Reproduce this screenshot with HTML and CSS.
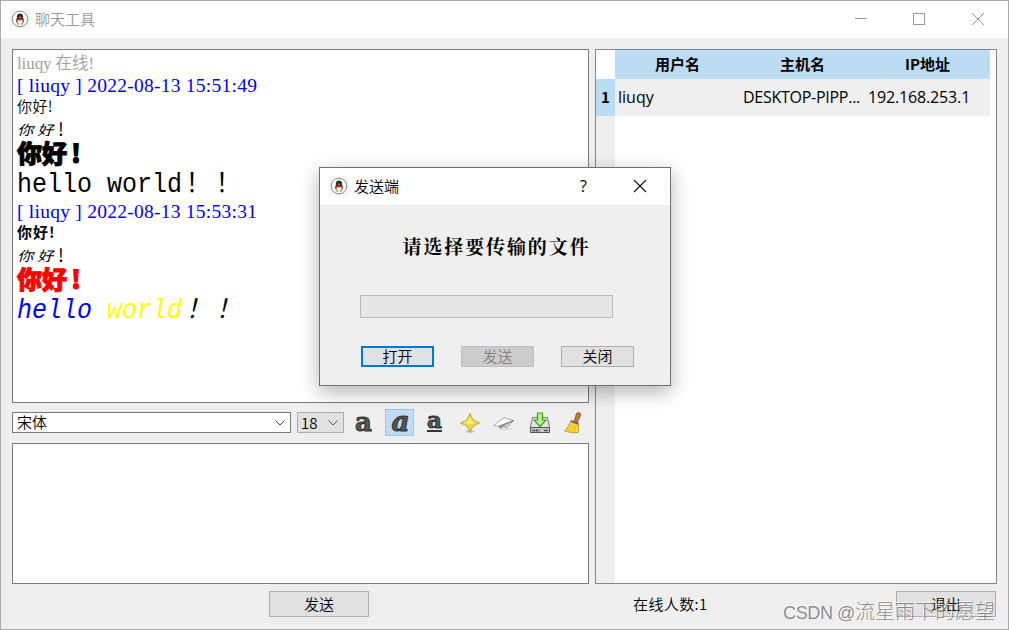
FILE: index.html
```html
<!DOCTYPE html>
<html lang="zh-CN">
<head>
<meta charset="UTF-8">
<meta name="viewport" content="width=device-width, initial-scale=1.0">
<title>聊天工具</title>
<link rel="stylesheet" href="styles.css">
</head>
<body>
<svg width="0" height="0" class="defs">
  <symbol id="penguin" viewBox="0 0 20 20">
    <rect width="20" height="20" fill="#f5f5f5"/>
    <circle cx="10" cy="10" r="7.8" fill="#fff" stroke="#8a8a8a" stroke-width="1"/>
    <ellipse cx="10" cy="8" rx="3.200" ry="3.600" fill="#2b2b2b"/>
    <ellipse cx="10" cy="11.800" rx="3.800" ry="3.300" fill="#333"/>
    <ellipse cx="10" cy="12.500" rx="2.700" ry="2.500" fill="#fff"/>
    <path d="M7.200 15h2M10.900 15h2" stroke="#d89a30" stroke-width="1.300"/>
    <path d="M6.400 9.200Q10 10.600 13.600 9.200V10.500Q10 11.800 8.500 11.100V12.300H7.300V11L6.400 10.700z" fill="#e8201c"/>
    <path d="M8.200 7.800h3.600L10 9.300z" fill="#e0a030"/>
  </symbol>
</svg>

<div class="window">
  <div class="titlebar">
    <svg class="logo" width="20" height="20"><use href="#penguin"/></svg>
    <span class="title">聊天工具</span>
    <svg class="controls" width="132" height="20" fill="none" stroke="#999">
      <path d="M0 9.500h12"/>
      <rect x="58.500" y="4.500" width="11" height="11"/>
      <path d="M117 4l12 12M129 4l-12 12"/>
    </svg>
  </div>

  <div class="content">
    <div class="left">
      <div class="messages">
        <p class="online">liuqy <span>在线!</span></p>
        <p class="date">[ liuqy ] 2022-08-13 15:51:49</p>
        <p class="small">你好!</p>
        <p class="script"><i>你</i><i>好</i><b>!</b></p>
        <p class="heavy">你好<b>!</b></p>
        <p class="hello">hello world<span class="marks">！！</span></p>
        <p class="date">[ liuqy ] 2022-08-13 15:53:31</p>
        <p class="small bold">你好!</p>
        <p class="script"><i>你</i><i>好</i><b>!</b></p>
        <p class="heavy red">你好<b>!</b></p>
        <p class="hello italic"><span class="blue">hello </span><span class="yellow">world</span><span class="marks">！！</span></p>
      </div>

      <div class="toolbar">
        <div class="combo font-family"><span>宋体</span><svg width="12" height="8"><path d="M1.500 1.500l4.500 4.500 4.500-4.500" fill="none" stroke="#444"/></svg></div>
        <div class="combo font-size"><span>18</span><svg width="12" height="8"><path d="M1.500 1.500l4.500 4.500 4.500-4.500" fill="none" stroke="#555"/></svg></div>
        <div class="tool tool-bold">a</div>
        <div class="tool tool-italic active">a</div>
        <div class="tool tool-underline">a</div>
        <div class="tool tool-star">
          <svg width="22" height="22" viewBox="0 0 22 22">
            <ellipse cx="11" cy="19.500" rx="5" ry="1.200" fill="#ccc"/>
            <path d="M11 1.500Q12.800 6.500 14.200 7.800Q15.500 9.200 20.500 11Q15.500 12.800 14.200 14.200Q12.800 15.500 11 20.500Q9.200 15.500 7.800 14.200Q6.500 12.800 1.500 11Q6.500 9.200 7.800 7.800Q9.200 6.500 11 1.500z" fill="#f2d944" stroke="#c5a51c"/>
            <path d="M11 4.500L12.800 9.200L17 11L11 11.800L5 11L9.200 9.200z" fill="#fbef8c"/>
          </svg>
        </div>
        <div class="tool tool-plane">
          <svg width="24" height="22" viewBox="0 0 24 22">
            <ellipse cx="13" cy="17" rx="8" ry="1" fill="#ddd"/>
            <path d="M21.500 8.500L12 5.500L1.500 13.500L6.500 14.500z" fill="#fafafa" stroke="#999" stroke-width=".8"/>
            <path d="M21.500 8.500L6.500 14.200L8.500 16.500L11 14.500z" fill="#999" stroke="#777" stroke-width=".6"/>
            <path d="M21.500 8.500L10.500 14.200L15 15.500z" fill="#ddd" stroke="#888" stroke-width=".8"/>
          </svg>
        </div>
        <div class="tool tool-save">
          <svg width="22" height="22" viewBox="0 0 22 22">
            <path d="M3.500 5.500h15l2 9.500v5.500h-19V15z" fill="#e6e6e6" stroke="#777"/>
            <path d="M1.500 15.500h19v5h-19z" fill="#c4c7c4" stroke="#555"/>
            <path d="M3.500 18.500h7" stroke="#333" stroke-width="2" stroke-dasharray="1 .7"/>
            <path d="M15 18.500h4" stroke="#4a654a" stroke-width="1.500"/>
            <path d="M8.500 1h5v7h3.500l-6 6.500L5 8h3.500z" fill="#b7ee91" stroke="#39a719" stroke-width="1.200"/>
          </svg>
        </div>
        <div class="tool tool-broom">
          <svg width="20" height="24" viewBox="0 0 20 24">
            <path d="M11.500 9.500L13.500 2.500Q15.500 .5 17.500 2.500Q18 5 14.500 11z" fill="#bd7d31" stroke="#875116" stroke-width=".8"/>
            <path d="M8 10L15.500 12.500L15.500 21.500Q8 22.500 1.500 20Q5.500 16 8 10z" fill="#f4d83d" stroke="#bd9118" stroke-width=".8"/>
            <path d="M8.500 13L4.500 20M10.500 14L8 21M13 15L11.500 21.500" stroke="#dfb82a" stroke-width=".8"/>
            <path d="M8 10l7.500 2.700" stroke="#76527c" stroke-width="2.200"/>
          </svg>
        </div>
      </div>

      <div class="editor"></div>
      <div class="actions"><button class="send">发送</button></div>
    </div>

    <div class="right">
      <div class="users">
        <div class="corner"></div>
        <div class="head">用户名</div>
        <div class="head">主机名</div>
        <div class="head">IP地址</div>
        <div class="index">1</div>
        <div class="cell">liuqy</div>
        <div class="cell host">DESKTOP-PIPP...</div>
        <div class="cell ip">192.168.253.1</div>
        <div class="gutter"></div>
      </div>
      <div class="status">
        <span>在线人数:1</span>
        <button class="quit">退出</button>
      </div>
    </div>
  </div>
</div>

<div class="dialog">
  <div class="dialog-title">
    <svg class="logo" width="20" height="20"><use href="#penguin"/></svg>
    <span class="title">发送端</span>
    <span class="help">?</span>
    <svg class="close" width="14" height="14"><path d="M1 1l12 12M13 1L1 13" fill="none" stroke="#111" stroke-width="1.100"/></svg>
  </div>
  <h2>请选择要传输的文件</h2>
  <div class="file-name"></div>
  <div class="dialog-buttons">
    <button class="primary">打开</button>
    <button disabled>发送</button>
    <button>关闭</button>
  </div>
</div>

<div class="watermark"><span>CSDN @</span>流星雨下的愿望</div>
</body>
</html>
```
FILE: styles.css
```css
* {
  box-sizing: border-box;
}
body {
  margin: 0;
  width: 1009px;
  height: 630px;
  overflow: hidden;
  position: relative;
  font-family: "Noto Sans CJK SC", sans-serif;
  font-size: 15px;
  color: #000;
}
.defs {
  position: absolute;
}
.window {
  height: 630px;
  border: 1px solid #aaa;
  background: #efefef;
}
.titlebar {
  display: flex;
  align-items: center;
  height: 37px;
  padding: 0 21px 2px 9px;
  background: #fff;
  color: #999;
}
.title {
  margin-left: 5px;
  font-size: 15px;
  font-weight: 350;
  line-height: 20px;
}
.controls {
  margin-left: auto;
}
.content {
  display: flex;
  gap: 6px;
  padding: 11px 11px 0;
}
.left {
  width: 577px;
}
.right {
  width: 402px;
}
.messages {
  height: 354px;
  padding: 2px 4px;
  border: 1px solid #7a7a7a;
  background: #fff;
}
.messages p {
  margin: 0;
  white-space: pre;
}
.messages b,
.messages i {
  display: inline-block;
}
.online {
  height: 23px;
  font: 17px/23px "Liberation Serif", serif;
  letter-spacing: -0.1px;
  color: #a0a0a4;
}
.online span {
  font: 350 16.5px/20px "Liberation Serif", "Noto Sans CJK SC", serif;
}
.date {
  height: 22px;
  font: 19.5px/21px "Liberation Serif", serif;
  letter-spacing: 0.25px;
  color: #00f;
}
.small {
  height: 20px;
  font: 350 15px/18px "Noto Sans CJK SC", sans-serif;
  letter-spacing: 0.4px;
}
.small.bold {
  font-weight: 700;
  letter-spacing: 1px;
}
.script {
  height: 24px;
  font: 400 16px/24px "Noto Sans CJK SC", sans-serif;
}
.script i {
  width: 20px;
  padding-left: 2px;
  transform: skewX(-16deg) scaleY(0.85);
  font-style: normal;
}
.script b {
  margin-left: 1px;
  font-weight: 400;
  font-size: 18px;
  line-height: 22px;
}
.heavy {
  height: 25px;
  font: 900 25px/22px "Noto Sans CJK SC", sans-serif;
  -webkit-text-stroke: 1px;
}
.heavy b {
  margin-left: 4px;
}
.hello {
  display: flex;
  height: 35px;
  font: 25px/35px "Liberation Mono", monospace;
  transform: translateY(1px) scaleY(1.1);
}
.hello .marks {
  margin-left: 4px;
  font: 24px/33px "Liberation Serif", "Noto Sans CJK SC", serif;
  letter-spacing: 6px;
}
.red {
  color: #f00;
}
.italic,
.italic .marks {
  font-style: italic;
}
.italic .blue {
  color: #00f;
}
.italic .yellow {
  color: #ff0;
}
.toolbar {
  display: flex;
  align-items: center;
  height: 40px;
}
.combo {
  display: flex;
  align-items: center;
  justify-content: space-between;
  height: 21px;
  margin-bottom: 1px;
  padding: 0 4px;
  border: 1px solid #7a7a7a;
  background: #fff;
  font-size: 15px;
  font-weight: 350;
  line-height: 19px;
}
.combo span {
  padding-bottom: 3px;
}
.font-family {
  width: 279px;
}
.font-size {
  width: 47px;
  margin-left: 6px;
  padding: 0 4px 0 3px;
  border-color: #adadad;
  background: #e1e1e1;
}
.font-size span {
  padding-bottom: 1px;
}
.tool {
  display: flex;
  align-items: center;
  justify-content: center;
  width: 29px;
  height: 27px;
  margin: 0 0 1px 6px;
  font: bold 26px/20px "DejaVu Serif", serif;
  color: #555753;
  -webkit-text-stroke: 1px #2e3436;
}
.tool svg {
  flex: none;
}
.tool-bold {
  padding: 0 2px 2px 0;
}
.tool-italic {
  padding: 0 0 1px 2px;
  font-size: 28px;
  font-style: italic;
}
.active {
  border: 1px solid #90c8f6;
  background: #c0dcf3;
}
.tool-underline {
  padding-bottom: 6px;
  font-size: 23px;
  text-decoration: underline;
  text-decoration-thickness: 2px;
  text-underline-offset: 2px;
}
.tool-plane {
  margin-left: 5px;
}
.tool-save {
  margin-left: 7px;
}
.tool-broom {
  margin-left: 4px;
}
.editor {
  height: 141px;
  border: 1px solid #7a7a7a;
  background: #fff;
}
.actions {
  display: flex;
  justify-content: center;
  padding: 7px 0 0 37px;
}
button {
  padding: 0 0 2px 0;
  border: 1px solid #adadad;
  background: #e1e1e1;
  color: #000;
  font: 350 15px/18px "Noto Sans CJK SC", sans-serif;
}
.send,
.quit {
  width: 100px;
  height: 26px;
  padding-bottom: 1px;
}
.users {
  display: grid;
  grid-template-columns: 19px 125px 125px 125px;
  grid-template-rows: 29px 37px 1fr;
  height: 535px;
  border: 1px solid #828790;
  background: #fff;
}
.head,
.index {
  display: flex;
  align-items: center;
  justify-content: center;
  padding-bottom: 2px;
  background: #bcdcf4;
  font-size: 15px;
  font-weight: 700;
}
.cell {
  display: flex;
  align-items: center;
  padding: 0 0 1px 3px;
  background: #efefef;
  font: 16px "Open Sans", sans-serif;
}
.host {
  letter-spacing: -0.27px;
}
.ip {
  letter-spacing: -0.15px;
}
.gutter {
  background: #efefef;
}
.status {
  display: flex;
  align-items: center;
  justify-content: space-between;
  padding: 7px 1px 0 38px;
  font-weight: 350;
}
.status span {
  padding-bottom: 2px;
  letter-spacing: 0.4px;
}
.dialog {
  position: absolute;
  left: 319px;
  top: 167px;
  width: 352px;
  height: 219px;
  border: 1px solid #707070;
  background: #efefef;
  box-shadow: 0 6px 18px rgba(0, 0, 0, 0.3);
}
.dialog-title {
  display: flex;
  align-items: center;
  height: 37px;
  padding: 0 23px 2px 9px;
  background: #fff;
}
.help {
  margin-left: auto;
  margin-right: 46px;
  font: 16px "Open Sans", sans-serif;
}
.dialog h2 {
  margin: 29px 0 0;
  padding-left: 3px;
  font: 700 19px/24px "Noto Serif CJK SC", "Noto Sans CJK SC", serif;
  letter-spacing: 1.9px;
  text-align: center;
}
.file-name {
  width: 253px;
  height: 23px;
  margin: 37px 0 0 40px;
  border: 1px solid #bcbcbc;
  background: #e6e6e6;
}
.dialog-buttons {
  display: flex;
  gap: 27px;
  margin: 28px 0 0 41px;
}
.dialog-buttons button {
  width: 73px;
  height: 21px;
}
.dialog-buttons .primary {
  border: 2px solid #0078d7;
  line-height: 16px;
}
.dialog-buttons button:disabled {
  border-color: #bfbfbf;
  background: #ccc;
  color: #838383;
}
/* watermark lies over the quit button */
.watermark {
  position: absolute;
  right: 14px;
  top: 598px;
  font: 300 20px/26px "Noto Sans CJK SC", sans-serif;
  white-space: nowrap;
  color: rgba(95, 95, 95, 0.7);
  text-shadow: -1px -1px rgba(255, 255, 255, 0.7);
}
.watermark span {
  font-family: "Liberation Sans", sans-serif;
  font-size: 18px;
  letter-spacing: -0.4px;
}
```
